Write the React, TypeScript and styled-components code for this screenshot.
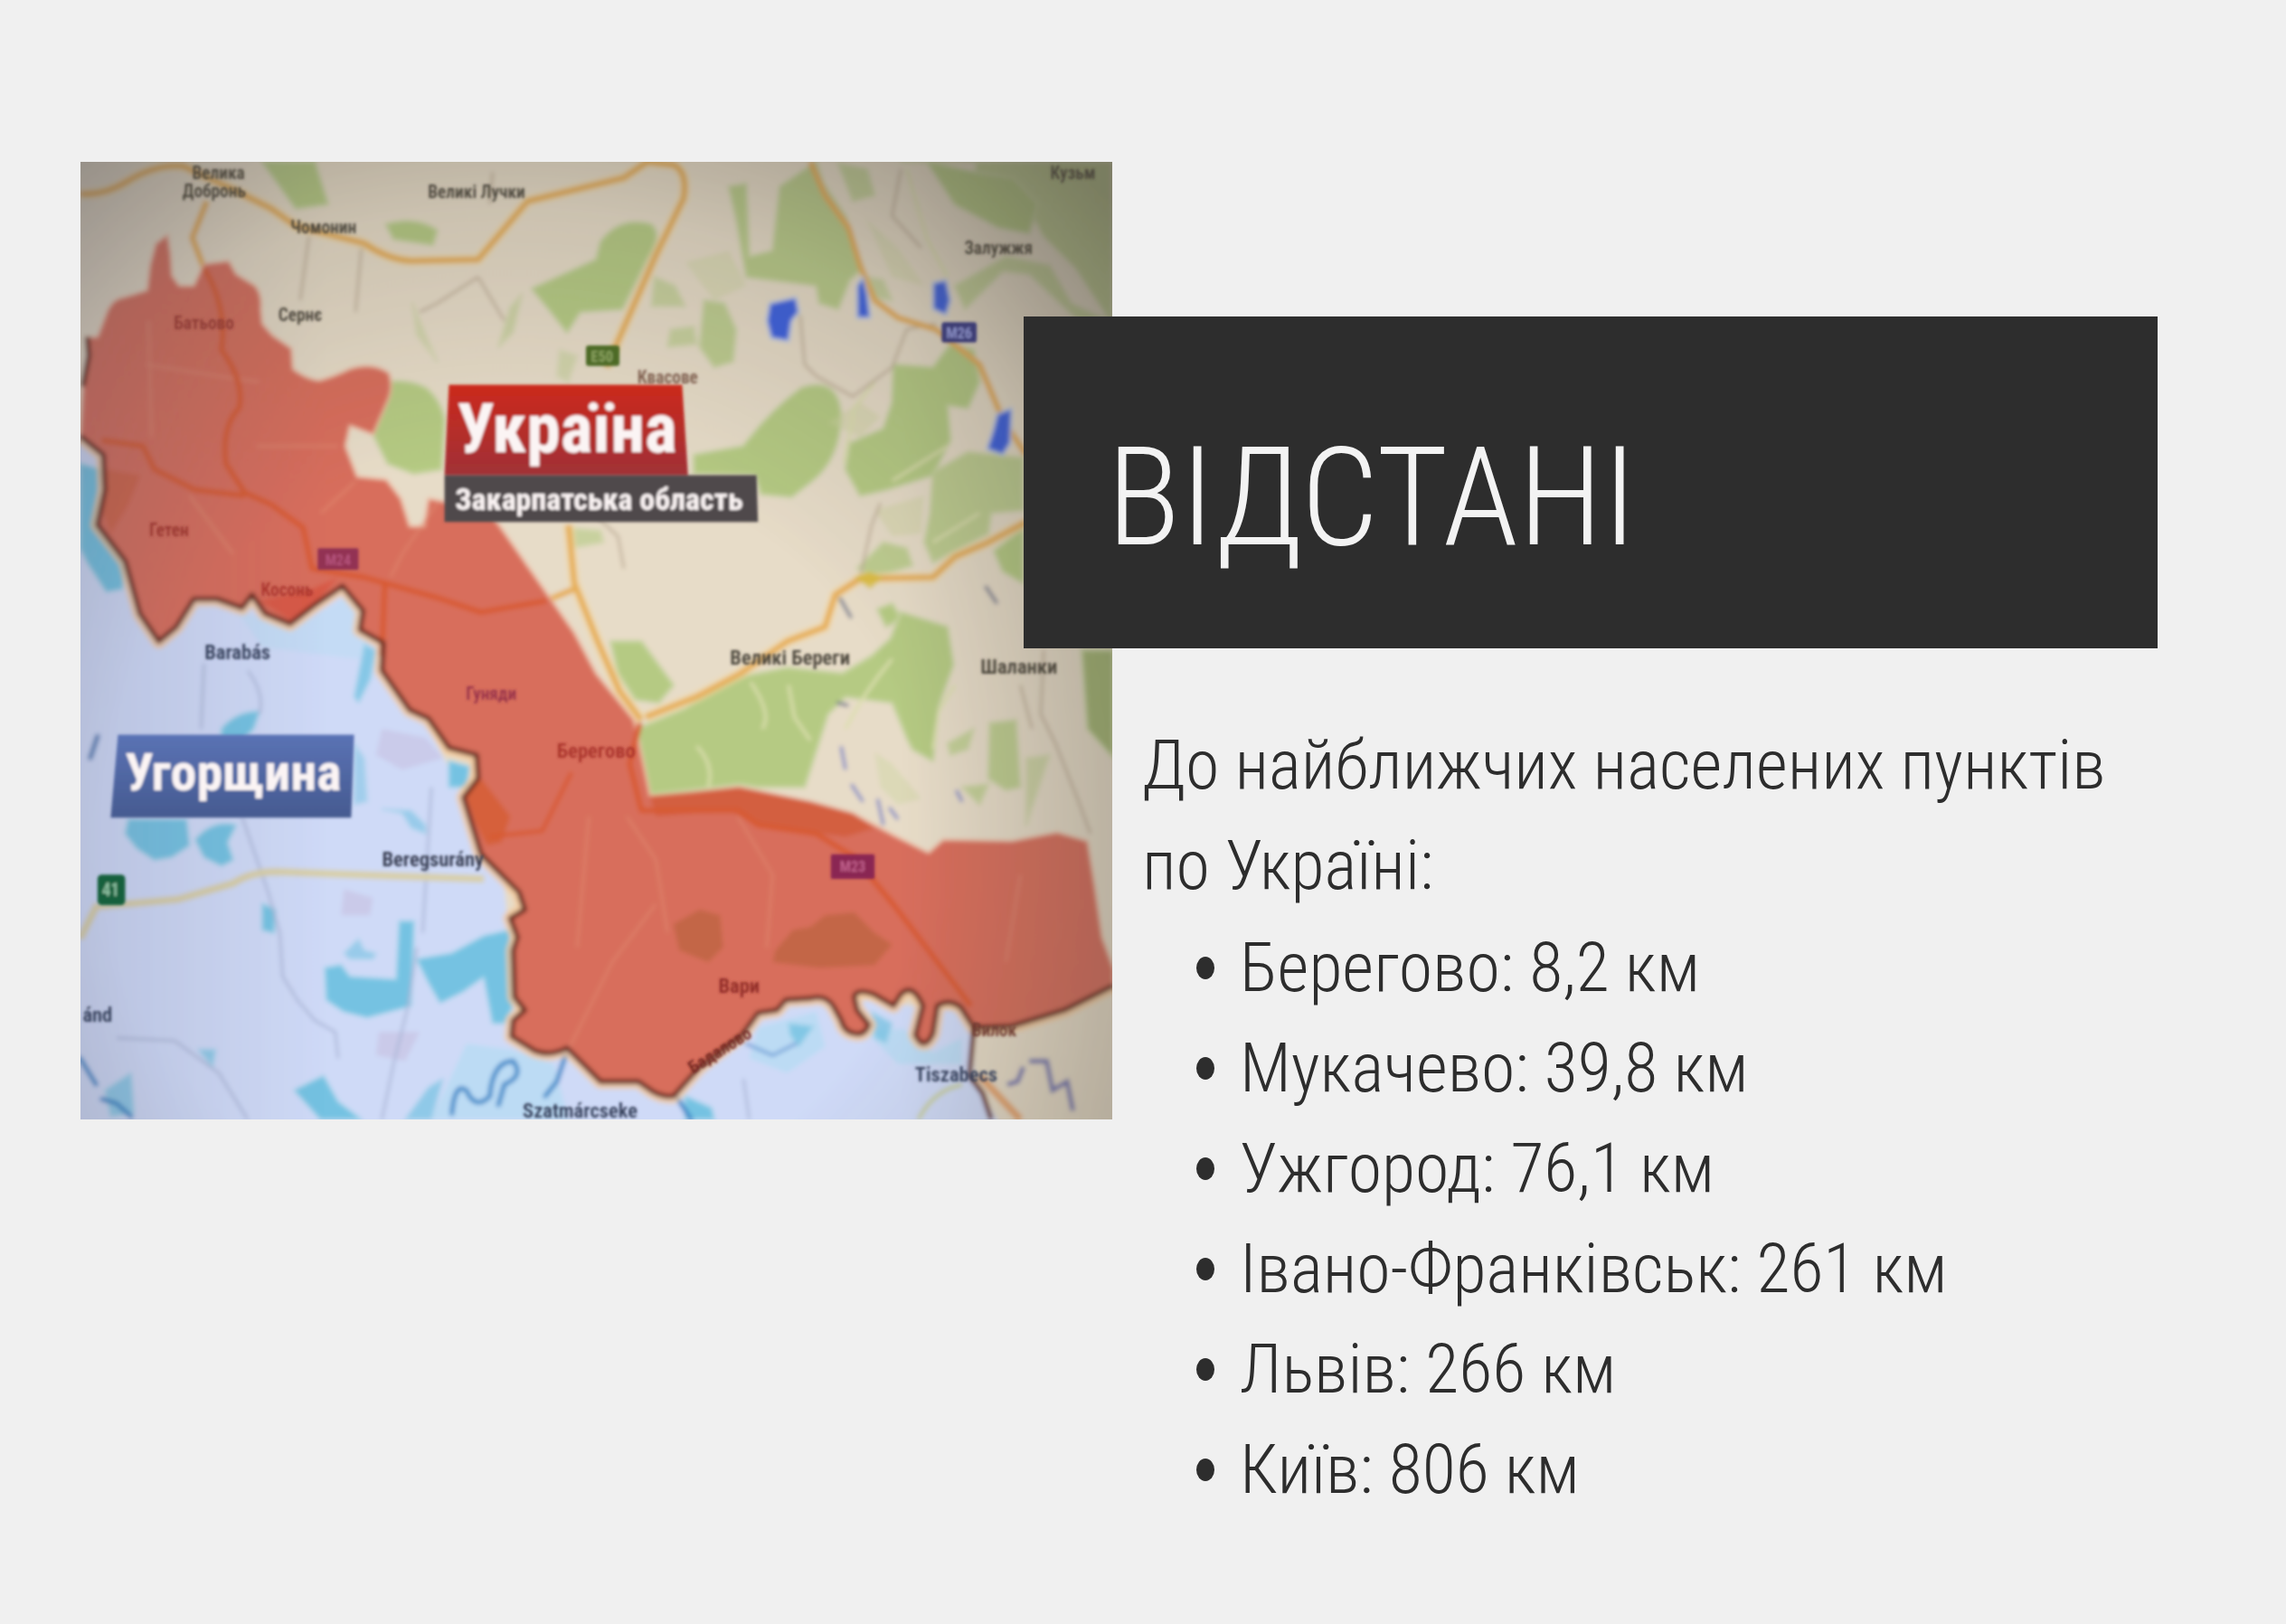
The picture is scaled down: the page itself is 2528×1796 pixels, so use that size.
import React from 'react';
import styled, { createGlobalStyle } from 'styled-components';

const GlobalStyle = createGlobalStyle`
  *, *::before, *::after { box-sizing: border-box; }
  body {
    margin: 0;
    background: #f0f0f0;
    color: #2d2d2d;
    font-family: "Roboto Condensed", Roboto, "Liberation Sans", sans-serif;
    font-weight: 300;
  }
`;

const Slide = styled.main`
  display: grid;
  grid-template-columns: 1141fr 1156fr;
  align-items: start;
  min-height: 100vh;
  padding: 179px 142px 100px 89px;
`;

const MapFigure = styled.figure`
  margin: 0;
  aspect-ratio: 1141 / 1059;
  overflow: hidden;
`;

const MapDrawing = styled.svg`
  display: block;
  width: 100%;
  height: 100%;
`;

const Content = styled.section`
  position: relative;
  padding-top: 171px;
`;

const Banner = styled.header`
  display: flex;
  align-items: center;
  min-height: 367px;
  margin-left: -98px;
  padding: 32px 24px 0 92px;
  background: #2d2d2d;
  color: #f3f3f3;
`;

const Title = styled.h1`
  margin: 0;
  font-size: 152px;
  line-height: 1;
  font-weight: 300;
`;

const Body = styled.div`
  margin-top: 74px;
  padding-left: 33px;
  font-size: 76px;
  line-height: 111px;
`;

const Lead = styled.p`
  margin: 0;
`;

const Distances = styled.ul`
  margin: 0;
  padding: 2px 0 0 60px;
  list-style: none;
`;

const Distance = styled.li`
  display: flex;
  align-items: center;
  gap: 28px;

  &::before {
    content: '';
    flex: none;
    width: 20px;
    height: 25px;
    border-radius: 50%;
    background: #2d2d2d;
  }
`;

const Place = styled.text<{ $tone?: string; $size?: number }>`
  font-family: "Roboto Condensed", Roboto, sans-serif;
  font-size: ${p => p.$size ?? 12}px;
  font-weight: 600;
  fill: ${p => p.$tone ?? '#4a443a'};
  text-anchor: middle;
`;

const Caption = styled.text<{ $size: number }>`
  font-family: "Roboto Condensed", Roboto, sans-serif;
  font-size: ${p => p.$size}px;
  font-weight: 700;
  fill: #fbf4f4;
  text-anchor: middle;
`;

const distances = [
  ['Берегово', '8,2'],
  ['Мукачево', '39,8'],
  ['Ужгород', '76,1'],
  ['Івано-Франківськ', '261'],
  ['Львів', '266'],
  ['Київ', '806'],
];

const northEdge =
  'M60 231 L67 231 L72 218 Q75 208 81 205 Q92 202 101 199 L103 182 L107 167 L115 161 L117 174 L118 189 L123 196 L133 196 L140 181 L157 179 L162 188 L175 196 Q180 202 179 212 L180 222 L187 230 L200 239 L201 253 Q210 260 219 261 Q230 258 240 253 Q256 248 267 256 Q270 266 266 275 L256 298 L240 292 L237 306 L245 327 L265 329 L275 342 L281 361 L291 361 L294 342 L335 350 L343 361 L394 434 L409 462 L435 494 L446 546 L475 544 L507 540 L556 550 L585 558 L613 573 L637 585 L647 576 L694 577 L725 571 L746 577 L751 608 L756 643 L764 665 L764 676';
const southEdge =
  'L730 693 L694 704 L668 705 L659 691 Q651 685 643 690 L640 709 Q634 722 628 710 L633 690 Q626 674 618 682 L613 690 L599 682 Q587 678 586 684 L588 693 L596 703 Q593 711 586 709 Q579 708 577 700 L572 691 Q567 682 556 685 L539 686 L533 693 L520 695 L509 710 L480 732 L462 752 Q455 753 448 749 L438 742 L412 742 L389 719 Q378 725 367 721 L351 711 L352 700 L360 693 L353 684 L352 652 L355 643 L350 630 L360 624 L356 612 L341 597 L330 586 L318 547 L328 534 L327 518 L308 513 L294 493 L281 487 L262 460 L263 441 L247 432 L249 419 L235 402 L216 415 L199 428 L182 421 L173 408 L166 417 L149 411 L133 411 L121 430 L109 440 L96 421 L86 385 L67 360 L72 336 L71 312 L55 299';
const territory = `${northEdge} ${southEdge} L57 265 L61 244 Z`;
const border = `M764 676 ${southEdge}`;

function RegionMap() {
  return (
    <MapDrawing viewBox="55.3 111 707.7 657" preserveAspectRatio="none" role="img" aria-label="Карта">
      <defs>
        <filter id="soft" x="-5%" y="-5%" width="110%" height="110%">
          <feGaussianBlur stdDeviation="1.5" />
        </filter>
        <filter id="softText" x="-5%" y="-5%" width="110%" height="110%">
          <feGaussianBlur stdDeviation="1" />
        </filter>
        <radialGradient id="shade" cx="0.42" cy="0.7" r="0.85">
          <stop offset="0.45" stopColor="#4e4a42" stopOpacity="0" />
          <stop offset="0.75" stopColor="#4e4a42" stopOpacity="0.18" />
          <stop offset="1" stopColor="#4e4a42" stopOpacity="0.52" />
        </radialGradient>
        <linearGradient id="sides" x1="0" y1="0" x2="1" y2="0">
          <stop offset="0" stopColor="#50506a" stopOpacity="0.18" />
          <stop offset="0.25" stopColor="#50506a" stopOpacity="0" />
          <stop offset="0.78" stopColor="#4e4a42" stopOpacity="0" />
          <stop offset="1" stopColor="#4e4a42" stopOpacity="0.2" />
        </linearGradient>
        <linearGradient id="redPlate" x1="0" y1="0" x2="0" y2="1">
          <stop offset="0" stopColor="#cb2a1c" />
          <stop offset="1" stopColor="#a03036" />
        </linearGradient>
        <linearGradient id="bluePlate" x1="0" y1="0" x2="0" y2="1">
          <stop offset="0" stopColor="#5a72b4" />
          <stop offset="1" stopColor="#455a90" />
        </linearGradient>
      </defs>

      <g filter="url(#soft)">
        <rect x="40" y="100" width="740" height="680" fill="#e7dcc8" />

        {/* woodland */}
        <g fill="#b5ca83" stroke="#c8d3a0" strokeWidth="2" strokeLinejoin="round">
          <path d="M180 111 L216 111 L225 140 L203 143 L190 125Z" />
          <path d="M265 154 Q285 148 300 158 L297 168 L270 164Z" />
          <path d="M365 198 L409 178 L412 166 Q425 148 447 154 Q455 162 444 178 L427 212 L398 214 L389 228 L378 214Z" />
          <path d="M266 262 Q280 260 292 266 Q302 274 305 288 L303 322 L284 325 L266 318 L256 298Z" />
          <path d="M476 312 L510 306 Q528 282 550 266 Q575 258 577 285 Q576 315 557 330 L543 341 L522 339 L518 326 L476 325Z" />
          <path d="M535 128 L560 111 L565 126 L580 148 L592 184 L583 192 L575 212 L562 208 L560 196 L512 190 L505 150 L500 128 L512 126 L514 176 L530 172Z" opacity=".9" />
          <path d="M483 206 L497 208 L505 226 L503 248 L490 252 L480 238Z" opacity=".8" />
          <path d="M449 190 L463 196 L470 210 L447 210Z" opacity=".6" />
          <path d="M460 226 L476 224 L478 236 L458 238Z" opacity=".6" />
          <path d="M618 111 L670 111 L668 126 L700 132 L716 162 L738 184 L763 222 L763 111 L690 111Z" opacity=".8" />
          <path d="M636 111 L655 140 L685 156 L706 160 L712 140 L695 122 L668 118Z" />
          <path d="M655 196 L690 176 L720 182 L735 208 L760 220 L740 220 L706 188 L688 186 L662 212Z" opacity=".7" />
          <path d="M575 112 L595 116 L600 134 L585 138Z" opacity=".7" />
          <path d="M596 190 L606 192 L612 206 L598 204Z" opacity=".6" />
          <path d="M613 250 L640 252 L652 236 L668 240 L672 262 L664 280 L650 278 L652 302 L640 326 L608 336 L590 340 L580 322 L583 304 L606 294 L612 276Z" />
          <path d="M640 324 L664 310 L702 314 L702 350 L680 352 L678 366 L640 386 L634 372 L638 352Z" opacity=".8" />
          <path d="M588 390 L606 372 L622 376 L626 388 L600 396Z" opacity=".8" />
          <path d="M682 378 L702 362 L702 400 L688 392Z" />
          <path d="M602 418 L612 414 L618 424 L608 430Z" />
          <path d="M611 438 L618 420 L650 430 L654 456 L644 484 L640 522 L626 514 L622 506 L612 482 L580 478 L568 490 L552 540 L520 540 L507 538 L446 545 L437 500 L470 486 L500 466 L540 458 L578 462 L598 450Z" />
          <path d="M419 440 L440 440 L462 470 L452 482 L436 480 L424 462Z" />
          <path d="M388 362 L412 364 L414 372 L392 376Z" opacity=".6" />
          <path d="M679 496 L697 494 L700 540 L690 542 L678 534Z" opacity=".8" />
          <path d="M650 510 L668 500 L664 514 L652 518Z" opacity=".7" />
          <path d="M704 520 L720 518 L704 566Z" opacity=".5" />
          <path d="M742 446 L764 446 L764 520 L746 500Z" fill="#a4b674" />
          <path d="M660 540 L678 538 L672 552Z" opacity=".7" />
          <path d="M350 211 L358 202 L352 228 L342 238Z" opacity=".5" />
          <path d="M283 208 L300 248 L286 230Z" opacity=".4" />
          <path d="M384 240 L396 244 L390 262 L382 258Z" opacity=".4" />
        </g>
        <g fill="#cfd4a2" opacity=".45">
          <path d="M470 180 L500 172 L512 196 L490 206Z" />
          <path d="M594 150 L616 170 L634 196 L612 190Z" />
          <path d="M568 290 L590 276 L604 286 L590 300Z" />
          <path d="M600 350 L634 340 L632 366 L612 368Z" />
          <path d="M600 516 L612 524 L632 548 L616 552 L604 540Z" />
        </g>
        <g fill="none" stroke="#dcdfae" strokeWidth="2">
          <path d="M515 468 Q530 490 523 500" />
          <path d="M541 470 L545 492 L556 508" />
          <path d="M580 500 Q592 476 612 452" />
          <path d="M478 512 Q490 524 486 540" />
          <path d="M640 514 L644 488 L655 470" />
          <path d="M579 318 L586 280 L600 262" />
          <path d="M612 330 L650 306" />
          <path d="M640 372 L672 352" />
          <path d="M622 116 L636 164 L650 190" />
        </g>

        {/* minor roads */}
        <g fill="none" stroke="#bfae98" strokeWidth="1.6">
          <path d="M212 162 L206 206 M248 170 L244 214 M336 140 L338 118 M328 190 L300 208 L288 214 M328 190 L346 220" />
          <path d="M549 216 L552 250 L560 258 L585 272 L612 252 L622 226 L642 222" />
          <path d="M590 396 L598 360 L604 345 M716 446 L714 490 L724 510 L740 550 L748 572 M700 470 L708 500" />
          <path d="M394 340 L424 368 L428 390 M618 116 L612 148 L632 170" />
        </g>

        {/* main roads */}
        <g fill="none" stroke="#f3dba6" strokeWidth="8" strokeLinejoin="round" opacity=".6">
          <path d="M55 133 Q72 134 88 124 Q108 112 126 114 L160 130 L186 143 L203 155 L250 167 Q266 178 282 179 L328 178 L362 138 L428 122 L444 111 L462 113 Q472 118 469 136 L450 175 L416 252" />
          <path d="M443 492 L478 478 L508 462 L540 440 L566 430 L573 408 L590 397 L640 396 L655 382 L678 372 L704 358" />
          <path d="M390 360 L394 400 L410 440 L425 474 L440 494" />
        </g>
        <g fill="none" stroke="#e6ae58" strokeWidth="4" strokeLinejoin="round">
          <path d="M55 133 Q72 134 88 124 Q108 112 126 114 L160 130 L186 143 L203 155 L250 167 Q266 178 282 179 L328 178 L362 138 L428 122 L444 111 L462 113 Q472 118 469 136 L450 175 L416 252" />
          <path d="M142 138 L132 163 L140 184" />
          <path d="M556 111 L566 134 L582 156 L590 182 L600 206 L616 218 L642 226 L672 250 L688 288 L704 312" />
          <path d="M443 492 L478 478 L508 462 L540 440 L566 430 L573 408 L590 397 L640 396 L655 382 L678 372 L704 358" />
          <path d="M390 360 L394 400 L410 440 L425 474 L440 494 M375 412 L394 404" />
        </g>
        <path d="M586 396 L596 392 L606 396 L597 404Z" fill="#d8bd3c" opacity=".8" />

        {/* Hungary */}
        <path d="M50 296 L71 312 L72 340 L86 385 L109 430 L130 405 L240 400 L264 440 L345 600 L355 700 L460 745 L540 680 L668 695 L668 739 L688 775 L50 775Z" fill="#cfdaf7" />
        <g fill="#c4b4d6" opacity=".4">
          <path d="M262 500 L292 506 L304 520 L276 528 L258 518Z" />
          <path d="M236 610 L256 616 L254 628 L234 628Z" />
          <path d="M260 708 L288 708 L278 728 L258 724Z" />
        </g>
        <g fill="#b4dcf2" opacity=".7">
          <path d="M162 418 L200 432 L240 408 L256 436 L246 452 L180 444Z" opacity=".6" />
          <path d="M320 716 L350 720 L380 730 L390 768 L296 768Z" />
          <path d="M520 705 L560 694 L566 718 L540 736 L514 726Z" />
          <path d="M592 706 L620 706 L640 722 L660 712 L660 730 L616 730Z" />
        </g>
        <g fill="#74c2e2" stroke="#9dd2ea" strokeWidth="1.5" strokeLinejoin="round">
          <path d="M55 318 L69 322 L66 360 L86 388 L84 404 L73 406 L60 386 L55 376Z" />
          <path d="M88 562 L128 562 L130 580 L118 588 L106 590 L94 582 L86 572Z" />
          <path d="M134 576 Q146 562 162 566 L156 578 L160 590 L152 594 L140 588Z" />
          <path d="M152 500 Q162 488 178 488 L174 500 L166 508 L152 506Z" />
          <path d="M250 442 L258 446 L254 466 L246 482 L243 478Z" opacity=".8" />
          <path d="M243 510 L250 520 L252 550 L243 552Z" opacity=".5" />
          <path d="M308 522 L322 526 L320 540 L308 540Z" />
          <path d="M262 555 L282 556 L292 566 L292 572 L282 568 L276 558Z" opacity=".6" />
          <path d="M223 664 L234 662 L240 670 L272 672 L274 632 L284 632 L282 690 L252 698 L236 694 L224 686Z" />
          <path d="M286 658 L310 654 L332 642 L350 638 L352 690 L346 702 L338 702 L332 670 L318 680 L302 688 L294 674Z" />
          <path d="M202 748 L222 738 L232 756 L248 768 L220 768Z" />
          <path d="M278 768 L294 746 L304 740 L296 768Z" opacity=".7" />
          <path d="M180 620 L189 624 L188 640 L180 638Z" />
          <path d="M236 654 L246 644 L250 652 L258 654 L256 658 L240 658Z" opacity=".6" />
          <path d="M72 748 L90 736 L92 764 L76 766Z" opacity=".7" />
          <path d="M136 720 L148 720 L146 732Z" opacity=".7" />
          <path d="M541 702 L558 704 L548 718 L542 710Z" opacity=".8" />
          <path d="M470 752 L488 760 L490 768 L470 768Z" />
          <path d="M598 694 L612 702 L608 716 L600 712Z" opacity=".7" />
        </g>
        <g fill="none" stroke="#abb6d6" strokeWidth="1.6">
          <path d="M140 455 L138 500 M170 460 Q182 476 178 490 M166 560 L184 612 L192 640 L194 670 L204 686 L216 700 L230 708 L232 726 M286 650 L280 690 L270 730 L262 768 M296 540 L290 640 M80 712 L120 714 L150 736 L170 768 M510 740 L514 768" />
        </g>
        <path d="M55 644 L66 622 Q90 620 122 617 L160 606 Q172 598 190 598 L270 601 L332 603" fill="none" stroke="#d8cfa8" strokeWidth="5" />
        <g fill="none" stroke="#3c88c8" strokeWidth="3" strokeLinecap="round">
          <path d="M62 520 L67 505" stroke="#4a76b0" />
          <path d="M55 726 L66 744 M70 754 L80 757 L90 766" />
          <path d="M310 764 Q312 742 320 748 Q326 762 336 752 Q338 728 352 728 Q360 738 346 744 L342 758" />
          <path d="M388 724 L382 742 L374 752" />
          <path d="M464 752 L474 768" />
          <path d="M512 716 L530 724 L546 716" stroke="#6f9fd6" strokeWidth="2" />
        </g>
        <path d="M630 768 Q640 748 660 744" fill="none" stroke="#c9d0a4" strokeWidth="3" />

        {/* lakes */}
        <g fill="#3a5fe0" stroke="#b9cdee" strokeWidth="1.5">
          <path d="M528 208 L546 204 L548 214 L543 220 L541 234 L529 232 L526 220Z" />
          <path d="M588 196 L592 190 L595 202 L597 218 L588 218Z" />
          <path d="M640 194 L649 192 L652 206 L649 216 L640 212Z" />
          <path d="M684 284 L694 280 L693 304 L688 312 L677 308 L681 296Z" />
        </g>
        <g fill="none" stroke="#7b83c4" strokeWidth="2">
          <path d="M577 512 L580 528 M584 538 L592 550 M602 548 L606 566 M610 554 L616 562 M656 542 L660 550" />
          <path d="M691 744 L698 742 L702 732 M706 728 L718 728 L722 748 L732 742 L736 762" stroke="#7274b0" strokeWidth="3" />
          <path d="M576 410 L584 424 M676 402 L684 414 M574 482 L582 484" stroke="#646b86" />
        </g>

        {/* borderland */}
        <path d={border} fill="none" stroke="#f5c795" strokeWidth="10" strokeLinejoin="round" opacity=".75" />
        <path d={territory} fill="#d86e5c" stroke="#eeb8a0" strokeWidth="1.5" />
        <g fill="#bd653f" opacity=".75">
          <path d="M462 634 L480 624 L494 628 L496 650 L486 660 L466 652Z" />
          <path d="M532 652 L544 638 L556 636 L566 628 L586 626 L600 640 L612 648 L600 662 L562 664 L530 660Z" />
          <path d="M446 546 L507 540 L556 550 L585 558 L600 568 L580 574 L520 566 L500 556 L450 560Z" fill="#d25b38" />
          <path d="M72 322 L96 326 L88 346 L76 366 L70 350Z" fill="#cc5a35" opacity=".6" />
          <path d="M178 412 L214 404 L232 396 L216 414 L200 426Z" fill="#d8533f" />
          <path d="M320 546 L330 534 L350 560 L344 578 L334 580 L326 564Z" fill="#d65d30" />
        </g>
        <g fill="none" stroke="#e08a72" strokeWidth="1.6" opacity=".7">
          <path d="M100 250 L150 258 L178 262 M102 220 L104 300 M176 306 L232 306 M220 352 L244 330 M300 345 L276 380 L268 396 M130 340 L160 380 M430 560 L450 590 L458 640 M506 560 L530 600 L526 650 M390 720 L420 660 L450 620 M700 600 L690 660 M404 560 L396 650" />
        </g>
        <g fill="none" stroke="#d85a30" strokeWidth="3.5" strokeLinejoin="round">
          <path d="M140 184 Q156 210 152 240 Q168 262 164 280 Q152 292 155 318 L168 338 L186 346 L208 362 L214 390 L250 396 L300 410 L330 420 L375 412" />
          <path d="M70 302 L98 306 L106 322 L134 336 L168 340" />
          <path d="M264 400 L262 450 M439 496 L432 524 L440 556 L506 556 L520 566 L560 572 L586 588 L614 622 L666 690" />
          <path d="M392 530 L372 570 L336 574" strokeWidth="2.5" />
        </g>
        <path d={border} fill="none" stroke="#64261a" strokeWidth="3.2" strokeLinejoin="round" />
        <path d="M60 231 L61 244 L57 265 M668 705 L665 738 L674 750 L680 768" fill="none" stroke="#64261a" strokeWidth="3.2" />
        <path d="M672 738 L700 768" fill="none" stroke="#e5a56f" strokeWidth="5" />

        <rect x="40" y="100" width="740" height="680" fill="url(#shade)" />
        <rect x="40" y="100" width="740" height="680" fill="url(#sides)" />
      </g>

      <g filter="url(#softText)">
        <Place x="150" y="123">Велика</Place>
        <Place x="147" y="135">Добронь</Place>
        <Place x="327" y="136">Великі Лучки</Place>
        <Place x="222" y="160">Чомонин</Place>
        <Place x="206" y="220">Сернє</Place>
        <Place x="736" y="123">Кузьм</Place>
        <Place x="685" y="174">Залужжя</Place>
        <Place x="458" y="263" $tone="#7c5b4c">Квасове</Place>
        <Place x="542" y="456" $size={14}>Великі Береги</Place>
        <Place x="699" y="462" $size={14}>Шаланки</Place>
        <Place x="163" y="452" $tone="#333d58" $size={14}>Barabás</Place>
        <Place x="297" y="594" $tone="#33394e" $size={14}>Beregsurány</Place>
        <Place x="67" y="701" $tone="#333d58" $size={14}>ánd</Place>
        <Place x="398" y="767" $tone="#333d58" $size={14}>Szatmárcseke</Place>
        <Place x="656" y="742" $tone="#333d58" $size={14}>Tiszabecs</Place>
        <Place x="682" y="711" $tone="#6c3a31">Вилок</Place>
        <Place x="140" y="226" $tone="#8c3a34">Батьово</Place>
        <Place x="116" y="368" $tone="#96352f">Гетен</Place>
        <Place x="197" y="409" $tone="#a8332c">Косонь</Place>
        <Place x="337" y="480" $tone="#96304a">Гуняди</Place>
        <Place x="409" y="520" $tone="#a8332c" $size={14}>Берегово</Place>
        <Place x="507" y="681" $tone="#8e2a25" $size={14}>Вари</Place>
        <Place x="496" y="724" $tone="#6f241e" transform="rotate(-32 496 724)">Бадалово</Place>

        <rect x="402" y="237" width="23" height="14" rx="2" fill="#4d6b27" />
        <Place x="413" y="248" $size={10} $tone="#8fa664">E50</Place>
        <rect x="646" y="221" width="24" height="14" rx="2" fill="#3d3d75" />
        <Place x="658" y="232" $size={10} $tone="#8a8fc4">M26</Place>
        <rect x="218" y="376" width="28" height="15" rx="1" fill="#923052" />
        <Place x="232" y="388" $size={10} $tone="#b6557e">M24</Place>
        <rect x="570" y="586" width="30" height="17" rx="1" fill="#8a2552" />
        <Place x="585" y="598" $size={10} $tone="#c0608c">M23</Place>
        <rect x="67" y="600" width="19" height="21" rx="3" fill="#17603c" />
        <Place x="76" y="615" $tone="#8fc0a2">41</Place>

        <path d="M308 264 L468 264 L472 326 L305 326Z" fill="url(#redPlate)" />
        <path d="M305 326 L519 326 L520 358 L305 358Z" fill="#50494c" />
        <path d="M81 504 L243 504 L241 561 L76 561Z" fill="url(#bluePlate)" />
        <Caption x="389" y="310" $size={47}>Україна</Caption>
        <Caption x="411" y="350" $size={21}>Закарпатська область</Caption>
        <Caption x="160" y="542" $size={36}>Угорщина</Caption>
      </g>
    </MapDrawing>
  );
}

export default function App() {
  return (
    <>
      <GlobalStyle />
      <Slide>
        <MapFigure>
          <RegionMap />
        </MapFigure>
        <Content>
          <Banner>
            <Title>ВІДСТАНІ</Title>
          </Banner>
          <Body>
            <Lead>До найближчих населених пунктів по Україні:</Lead>
            <Distances>
              {distances.map(([town, km]) => (
                <Distance key={town}>{`${town}: ${km} км`}</Distance>
              ))}
            </Distances>
          </Body>
        </Content>
      </Slide>
    </>
  );
}
